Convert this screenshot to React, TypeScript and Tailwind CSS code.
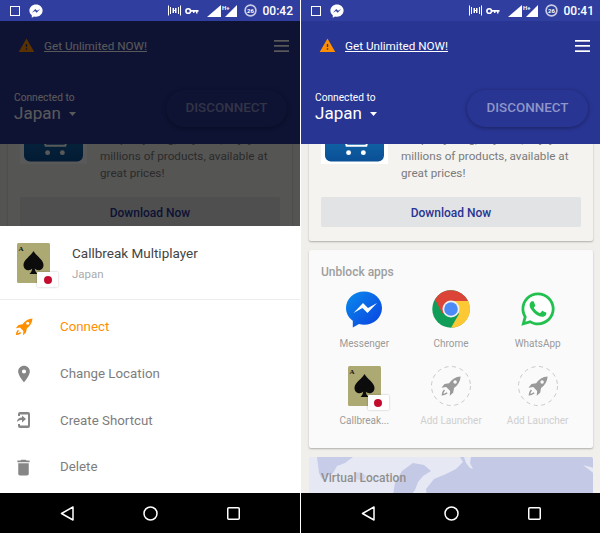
import React from "react";
import { FaWhatsapp } from "react-icons/fa";
import { MdDelete, MdPlace, MdWarning } from "react-icons/md";

const font = { fontFamily: "Roboto, sans-serif" };

const ROCKET =
  "M17.500.5C13 .8 10 2.800 7.500 6.200L3.500 7 .8 10.200 5 9.600 8.400 13 8 17.200 11 14.500 11.800 10.500C15.200 8 17.200 5 17.500.5Z";

function Rocket({ color, hole }: { color: string; hole: string }) {
  return (
    <svg width="18" height="18" viewBox="0 0 18 18">
      <path d={ROCKET} fill={color} />
      <circle cx="12.700" cy="5.300" r="1.500" fill={hole} />
      <path d="M3.400 12.200c-1 1.200-1.600 2.800-1.700 4.100 1.300-.1 2.900-.7 4.100-1.700" fill="none" stroke={color} strokeWidth="1.500" />
    </svg>
  );
}

function StatusBar({ time }: { time: string }) {
  return (
    <div className="flex h-[21px] items-center bg-[#303f9f] pl-[10px] pr-[7px] text-white">
      <div className="h-[10px] w-[10px] border-[1.5px] border-white" />
      <svg className="ml-[9px]" width="14" height="14" viewBox="0 0 14 14">
        <path d="M7 .5C3.300.5.400 3.200.400 6.600c0 1.900.9 3.600 2.400 4.700v2.400l2.200-1.200c.6.2 1.300.3 2 .3 3.700 0 6.600-2.800 6.600-6.200S10.700.5 7 .5z" fill="#fff" />
        <path d="M2.900 8.700 6.300 5l1.700 1.800L11.100 5 7.700 8.700 6 6.900z" fill="#303f9f" />
      </svg>
      <svg className="ml-auto" width="13" height="11" viewBox="0 0 13 11" fill="#fff">
        <rect x="0" y="0.500" width="1" height="10" />
        <rect x="12" y="0.500" width="1" height="10" />
        <rect x="2" y="2" width="1" height="7" />
        <rect x="10" y="2" width="1" height="7" />
        <rect x="4.500" y="3" width="1.500" height="5" />
        <rect x="7" y="3" width="1.500" height="5" />
        <rect x="6" y="5" width="1" height="1" />
      </svg>
      <svg className="ml-[4px]" width="14" height="8" viewBox="0 0 14 8" fill="none">
        <circle cx="3.200" cy="4" r="2.300" stroke="#fff" strokeWidth="1.600" />
        <path d="M5.500 3h8v1.800h-1V6.500h-1.500V4.800H9.500V6H8V4.800H5.500z" fill="#fff" />
      </svg>
      <svg className="ml-[8px]" width="14" height="12" viewBox="0 0 14 12">
        <path d="M14 0v12H0z" fill="#fff" />
      </svg>
      <span className="ml-[1px] self-start pt-[4px] text-[6px] font-bold leading-[7px]">H+</span>
      <svg className="ml-[-5px]" width="12" height="12" viewBox="0 0 12 12">
        <path d="M12 0v12H0z" fill="#fff" />
      </svg>
      <svg className="ml-[7px]" width="13" height="13" viewBox="0 0 13 13">
        <circle cx="6.500" cy="6.500" r="6.200" fill="#c9cce6" />
        <circle cx="6.500" cy="6.500" r="4.600" fill="#303f9f" />
        <text x="6.500" y="8.800" textAnchor="middle" fontSize="6" fontWeight="700" fill="#fff" fontFamily="Roboto, sans-serif">26</text>
      </svg>
      <span className="ml-[6px] text-[12px] font-medium leading-none">{time}</span>
    </div>
  );
}

function CartTile() {
  return (
    <div className="flex h-[64px] w-[67px] shrink-0 items-end justify-center bg-white pb-[2px]">
      <svg width="59" height="60" viewBox="0 0 60 60">
        <defs>
          <linearGradient id="cartg" x1="0" y1="0" x2="0" y2="1">
            <stop offset="0" stopColor="#1d86c6" />
            <stop offset="1" stopColor="#0a4f95" />
          </linearGradient>
        </defs>
        <rect width="60" height="60" rx="6" fill="url(#cartg)" />
        <path d="M20 36h24l-2 8H22z" fill="none" stroke="#fff" strokeWidth="2" />
        <circle cx="24" cy="51" r="2.500" fill="#fff" />
        <circle cx="39" cy="51" r="2.500" fill="#fff" />
      </svg>
    </div>
  );
}

function Spade({ w, h }: { w: number; h: number }) {
  return (
    <svg width={w} height={h} viewBox="0 0 33 40">
      <rect width="33" height="40" rx="1.500" fill="#aca972" />
      <text x="1.500" y="7.500" fontSize="7" fontWeight="700" fill="#111" fontFamily="Liberation Serif, serif">A</text>
      <path d="M16.500 8C14 13 6.500 16.500 6.500 22c0 3.400 2.600 5.300 5 5.300 1.500 0 2.800-.6 3.700-1.700-.2 2.300-1 3.900-2.700 5.400h8c-1.700-1.500-2.500-3.100-2.700-5.400.9 1.100 2.200 1.700 3.700 1.700 2.400 0 5-1.900 5-5.300C26.500 16.500 19 13 16.500 8z" fill="#0c0c0c" />
    </svg>
  );
}

function GameIcon() {
  return (
    <div className="relative h-[40px] w-[33px]">
      <Spade w={33} h={40} />
      <div className="absolute left-[20px] top-[29px] flex h-[15px] w-[21px] items-center justify-center rounded-[1px] bg-white shadow-[0_0_2px_rgba(0,0,0,0.3)]">
        <div className="h-[8px] w-[8px] rounded-full bg-[#c40d2e]" />
      </div>
    </div>
  );
}

function Messenger() {
  return (
    <svg width="36" height="37" viewBox="0 0 36 37">
      <defs>
        <linearGradient id="msg" x1="0" y1="0" x2="1" y2="1">
          <stop offset="0" stopColor="#0a8cec" />
          <stop offset="1" stopColor="#0b3fe0" />
        </linearGradient>
      </defs>
      <path d="M18 .5C8.100.5 0 7.900 0 17c0 5.200 2.600 9.800 6.800 12.800v6.700l6.200-3.400c1.600.4 3.300.7 5 .7 9.900 0 18-7.400 18-16.800S27.900.5 18 .5z" fill="url(#msg)" />
      <path d="M7.500 22 17 12l5 5 9-5-9.500 10-5-5z" fill="#fff" />
    </svg>
  );
}

function Chrome() {
  return (
    <svg width="38" height="38" viewBox="0 0 38 38">
      <circle cx="19" cy="19" r="18.700" fill="#109d58" />
      <path d="M19 .3A18.700 18.700 0 0 0 3 9.500L10.500 23.500 19 11h17A18.700 18.700 0 0 0 19 .3z" fill="#db4437" />
      <path d="M19 11h17.200A18.700 18.700 0 0 1 19 37.700L27 24z" fill="#fcc934" />
      <circle cx="19" cy="19" r="8.500" fill="#f1f1f1" />
      <circle cx="19" cy="19" r="6.800" fill="#4c8bf5" />
    </svg>
  );
}

function WhatsApp() {
  return (
    <div className="relative flex h-[36px] w-[36px] items-center justify-center">
      <div className="absolute left-[3px] top-[3px] h-[28px] w-[28px] rounded-full bg-white" />
      <FaWhatsapp size={38} color="#22c04e" className="relative" />
    </div>
  );
}

function AddLauncher() {
  return (
    <svg width="40" height="40" viewBox="0 0 40 40">
      <circle cx="20" cy="20" r="19.500" fill="none" stroke="#c9c9c9" strokeWidth="1" strokeDasharray="4 3.700" />
      <g transform="translate(9.500 10) scale(1.150)">
        <path d={ROCKET} fill="#9a9a9a" />
        <circle cx="12.700" cy="5.300" r="1.500" fill="#fafafa" />
        <path d="M3.400 12.200c-1 1.200-1.600 2.800-1.700 4.100 1.300-.1 2.900-.7 4.100-1.700" fill="none" stroke="#9a9a9a" strokeWidth="1.300" />
      </g>
    </svg>
  );
}

function AppCell({ icon, label, muted }: { icon: React.ReactNode; label: string; muted?: boolean }) {
  return (
    <div className="flex flex-col items-center">
      <div className="flex h-[40px] items-center justify-center">{icon}</div>
      <div className={`mt-[7px] text-[10px] leading-[16px] ${muted ? "text-[#cfcfcf]" : "text-[#9b9b9b]"}`}>{label}</div>
    </div>
  );
}

function MapBackdrop() {
  return (
    <svg className="absolute inset-0" width="285" height="60" viewBox="0 0 285 60">
      <rect width="285" height="60" fill="#e6e8f4" />
      <path d="M8 0h36l-8 6-8 3-4 7-6 3-5 3-3-6-1-8z" fill="#c7cce8" />
      <path d="M46 16l6-1 5 4-3 5-7-2z" fill="#d2d6ec" />
      <path d="M84 38l2-12 7-12 11-8 11 2 7 6-8 5-5 6-3 8-4 5z" fill="#c4c9e6" />
      <path d="M118 40l-1-8 8-10 12-5 10-5 7-7-3-5h137v12l-14-4 14 11v21z" fill="#c4c9e6" />
      <path d="M155 0l2 6 4 5 3 1-3-6 1-6z" fill="#e6e8f4" />
    </svg>
  );
}

function Main() {
  return (
    <div className="flex h-full flex-col">
      <div className="relative z-10 h-[123px] shrink-0 bg-[#283593] pl-[14px] pr-[11px]">
        <div className="flex h-[50px] items-center pb-[1px] pl-[4px]">
          <MdWarning size={17} color="#ff8f00" />
          <a className="ml-[9px] text-[11.700px] leading-[16px] text-white underline underline-offset-[1px]">Get Unlimited NOW!</a>
          <svg className="ml-auto" width="15" height="12" viewBox="0 0 15 12" fill="#fff">
            <rect width="15" height="1.700" y="0" />
            <rect width="15" height="1.700" y="5" />
            <rect width="15" height="1.700" y="10.300" />
          </svg>
        </div>
        <div className="mt-[19px] flex items-start justify-between">
          <div className="pt-[1px] text-white">
            <div className="text-[10.200px] leading-[14px]">Connected to</div>
            <div className="-mt-[1px] flex items-center">
              <span className="text-[17px] leading-[18px]">Japan</span>
              <svg className="ml-[8px] mt-[1px]" width="7" height="4" viewBox="0 0 7 4" fill="#fff">
                <path d="M0 0h7L3.500 4z" />
              </svg>
            </div>
          </div>
          <div className="mr-[2px] flex h-[37px] w-[121px] items-center justify-center rounded-full bg-[#283593] text-[13.400px] font-medium text-[#8f95c8] shadow-[0_1px_4px_rgba(0,0,0,0.35)]">
            DISCONNECT
          </div>
        </div>
      </div>
      <div className="min-h-0 flex-1 overflow-hidden bg-[#f0efeb] px-[8px]">
        <div className="mt-[-54px] rounded-[2px] bg-[#f4f3ef] px-[12px] pb-[14px] pt-[10px] shadow-[0_1px_2px_rgba(0,0,0,0.28)]">
          <div className="flex h-[81px] items-start">
            <CartTile />
            <div className="ml-[13px] mt-[31px] whitespace-nowrap text-[11.700px] leading-[17px] text-[#7b7b7b]">
              <div>Shop anything, anytime, enjoy</div>
              <div>millions of products, available at</div>
              <div>great prices!</div>
            </div>
          </div>
          <div className="mt-[16px] flex h-[30px] items-center justify-center rounded-[2px] bg-[#e2e3e5] pt-[1px] text-[12px] font-medium text-[#283593]">
            Download Now
          </div>
        </div>
        <div className="mt-[9px] h-[198px] rounded-[2px] bg-[#fafafa] px-[12px] pt-[14px] shadow-[0_1px_2px_rgba(0,0,0,0.28)]">
          <div className="text-[12px] font-medium leading-[16px] text-[#9e9e9e]">Unblock apps</div>
          <div className="mt-[9px] grid grid-cols-3 gap-y-[14px]">
            <AppCell icon={<Messenger />} label="Messenger" />
            <AppCell icon={<Chrome />} label="Chrome" />
            <AppCell icon={<WhatsApp />} label="WhatsApp" />
            <AppCell icon={<GameIcon />} label="Callbreak..." />
            <AppCell icon={<AddLauncher />} label="Add Launcher" muted />
            <AppCell icon={<AddLauncher />} label="Add Launcher" muted />
          </div>
        </div>
        <div className="relative mt-[9px] h-[60px] overflow-hidden rounded-[2px] px-[12px] pt-[13px]">
          <MapBackdrop />
          <div className="relative text-[12px] font-medium leading-[16px] text-[#8f8f8f]">Virtual Location</div>
        </div>
      </div>
    </div>
  );
}

function NavBar() {
  return (
    <div className="flex h-[40px] w-[300px] shrink-0 items-center bg-black pl-[60px]">
      <svg width="14" height="15" viewBox="0 0 14 15" fill="none">
        <path d="M13 1 1.500 7.500 13 14z" stroke="#fff" strokeWidth="1.500" strokeLinejoin="round" />
      </svg>
      <svg className="ml-[69px]" width="15" height="15" viewBox="0 0 15 15" fill="none">
        <circle cx="7.500" cy="7.500" r="6.500" stroke="#fff" strokeWidth="1.500" />
      </svg>
      <svg className="ml-[69px]" width="13" height="13" viewBox="0 0 13 13" fill="none">
        <rect x="0.750" y="0.750" width="11.500" height="11.500" rx="1" stroke="#fff" strokeWidth="1.500" />
      </svg>
    </div>
  );
}

function SheetRow({ icon, label, active }: { icon: React.ReactNode; label: string; active?: boolean }) {
  return (
    <div className="flex h-[46.600px] items-center">
      <div className="flex w-[60px] justify-start pl-[15px]">{icon}</div>
      <span className={`text-[13.300px] ${active ? "text-[#ff8f00]" : "text-[#7d7d7d]"}`}>{label}</span>
    </div>
  );
}

function ShortcutIcon() {
  return (
    <svg width="18" height="18" viewBox="0 0 18 18" fill="#868686">
      <path d="M5 1h8a2 2 0 0 1 2 2v12a2 2 0 0 1-2 2H5a2 2 0 0 1-2-2v-2h2v1.500h8v-11H5V5H3V3a2 2 0 0 1 2-2z" />
      <path d="M2 11c0-3 2-4.500 5-4.500V4.500L11 8l-4 3.500V9C5 9 3.500 9.500 2 11z" />
    </svg>
  );
}

function Sheet() {
  return (
    <div className="h-[267px] shrink-0 bg-white">
      <div className="flex h-[74px] items-start border-b border-[#ececec] pl-[17px] pt-[17px]">
        <GameIcon />
        <div className="ml-[22px]">
          <div className="text-[13.500px] leading-[20px] text-[#444]">Callbreak Multiplayer</div>
          <div className="mt-[2px] text-[11.500px] leading-[18px] text-[#ababab]">Japan</div>
        </div>
      </div>
      <div className="pt-[4px]">
        <SheetRow active icon={<Rocket color="#ff8f00" hole="#fff" />} label="Connect" />
        <SheetRow icon={<MdPlace size={20} color="#868686" className="-ml-[1px]" />} label="Change Location" />
        <SheetRow icon={<ShortcutIcon />} label="Create Shortcut" />
        <SheetRow icon={<MdDelete size={21} color="#868686" className="-ml-[2px]" />} label="Delete" />
      </div>
    </div>
  );
}

export default function App() {
  return (
    <div className="flex h-[533px] w-[600px] overflow-hidden bg-white" style={font}>
      <div className="flex h-full w-[300px] shrink-0 flex-col">
        <StatusBar time="00:42" />
        <div className="relative h-[205px] shrink-0 overflow-hidden">
          <div className="h-[472px]"><Main /></div>
          <div className="absolute inset-0 z-20 bg-black/65" />
        </div>
        <Sheet />
        <NavBar />
      </div>
      <div className="ml-px flex h-full w-[300px] shrink-0 flex-col">
        <StatusBar time="00:41" />
        <div className="min-h-0 flex-1"><Main /></div>
        <NavBar />
      </div>
    </div>
  );
}
